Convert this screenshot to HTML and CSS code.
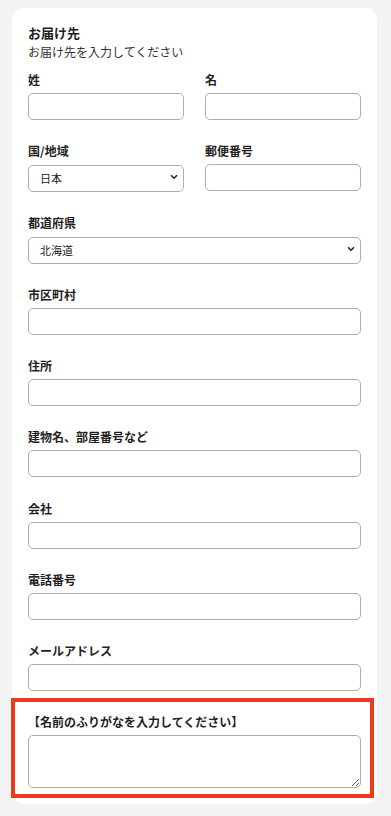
FILE: index.html
```html
<!DOCTYPE html>
<html lang="ja">
<head>
    <meta charset="UTF-8">
    <meta name="viewport" content="width=device-width, initial-scale=1.0">
    <title>お届け先</title>
    <link rel="stylesheet" href="styles.css">
</head>
<body>
    <form class="card">
        <h2 class="card-title">お届け先</h2>
        <p class="card-sub">お届け先を入力してください</p>

        <div class="fields">
            <div class="row">
                <div class="field">
                    <label>姓</label>
                    <input type="text">
                </div>
                <div class="field">
                    <label>名</label>
                    <input type="text">
                </div>
            </div>

            <div class="row">
                <div class="field">
                    <label>国/地域</label>
                    <div class="select-wrap">
                        <select><option>日本</option></select>
                        <svg class="chevron" width="8" height="6" viewBox="0 0 8 6"><path d="M1 1.2 L4 4.2 L7 1.2" fill="none" stroke="#222" stroke-width="1.6"/></svg>
                    </div>
                </div>
                <div class="field">
                    <label>郵便番号</label>
                    <input type="text">
                </div>
            </div>

            <div class="field">
                <label>都道府県</label>
                <div class="select-wrap">
                    <select><option>北海道</option></select>
                    <svg class="chevron" width="8" height="6" viewBox="0 0 8 6"><path d="M1 1.2 L4 4.2 L7 1.2" fill="none" stroke="#222" stroke-width="1.6"/></svg>
                </div>
            </div>

            <div class="field">
                <label>市区町村</label>
                <input type="text">
            </div>

            <div class="field">
                <label>住所</label>
                <input type="text">
            </div>

            <div class="field">
                <label>建物名、部屋番号など</label>
                <input type="text">
            </div>

            <div class="field">
                <label>会社</label>
                <input type="text">
            </div>

            <div class="field">
                <label>電話番号</label>
                <input type="text">
            </div>

            <div class="field">
                <label>メールアドレス</label>
                <input type="text">
            </div>

            <!-- highlighted furigana field -->
            <div class="field field-last highlight">
                <label>【名前のふりがなを入力してください】</label>
                <textarea></textarea>
            </div>
        </div>
    </form>
</body>
</html>
```

FILE: styles.css
```css
/* General */
body {
    margin: 0;
    background: #f3f3f3;
    font-family: "Noto Sans CJK JP", "Noto Sans", sans-serif;
    color: #1f1f1f;
}

/* Card */
.card {
    width: 333px;
    margin: 8px 0 0 12px;
    padding: 16px;
    background: #fff;
    border-radius: 12px;
}

.card-title {
    margin: 0;
    font-size: 13px;
    line-height: 18px;
    font-weight: bold;
}

.card-sub {
    margin: 1px 0 0;
    font-size: 12px;
    line-height: 18px;
    color: #333;
}

.fields {
    margin-top: 11px;
}

/* Fields */
.row {
    display: grid;
    grid-template-columns: 1fr 1fr;
    column-gap: 21px;
}

.field {
    display: flex;
    flex-direction: column;
    margin-bottom: 23.25px;
}

.field-last {
    margin-bottom: 0;
}

.field label {
    font-size: 12px;
    line-height: 16px;
    font-weight: bold;
    margin-bottom: 5px;
}

.field input,
.field select,
.field textarea {
    box-sizing: border-box;
    width: 100%;
    border: 1px solid #adadad;
    border-radius: 5px;
    background: #fff;
    font-family: inherit;
    margin: 0;
}

.field input {
    height: 27px;
}

.field textarea {
    height: 53px;
    display: block;
}

/* Select */
.select-wrap {
    position: relative;
}

.select-wrap select {
    height: 27px;
    padding: 0 11px;
    font-size: 11px;
    color: #222;
    appearance: none;
    -webkit-appearance: none;
}

.chevron {
    position: absolute;
    right: 6px;
    top: 10px;
    pointer-events: none;
}

/* Red highlight box */
.highlight {
    position: relative;
}

.highlight::after {
    content: "";
    position: absolute;
    top: -16.5px;
    left: -17px;
    right: -13px;
    bottom: -10px;
    border: 4px solid #f0381a;
    pointer-events: none;
}
```
